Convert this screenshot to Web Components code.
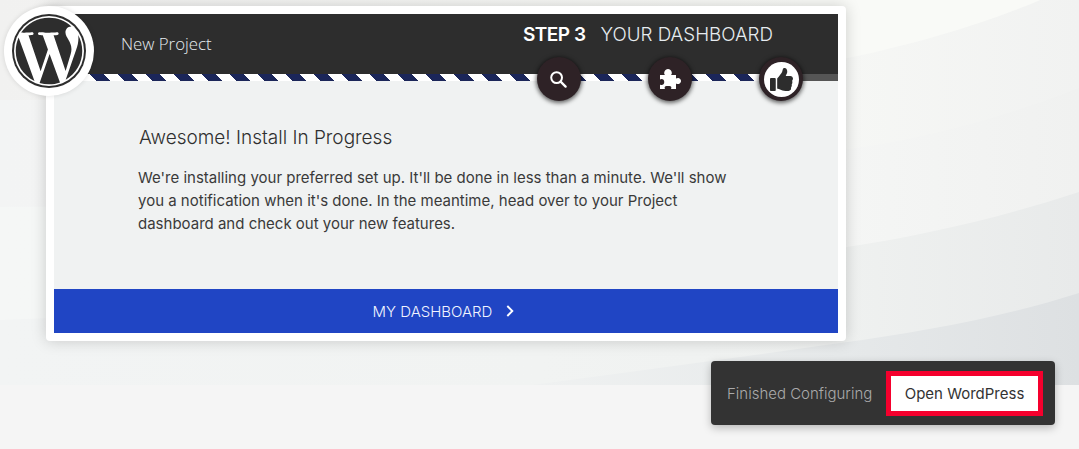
<!DOCTYPE html>
<html>
<head>
<meta charset="utf-8">
<title>New Project</title>
<style>
  html, body { margin: 0; padding: 0; background: #f5f5f5; }
  body { font-family: Inter, "Liberation Sans", sans-serif; overflow: hidden; }
</style>
</head>
<body>
<install-page>
  <wizard-card>
    <wizard-header slot="header" project="New Project" step="STEP 3" title="YOUR DASHBOARD"></wizard-header>
    <h2 slot="title">Awesome! Install In Progress</h2>
    <p slot="text">We're installing your preferred set up. It'll be done in less than a minute. We'll show<br>you a notification when it's done. In the meantime, head over to your Project<br>dashboard and check out your new features.</p>
    <span slot="cta">MY DASHBOARD</span>
  </wizard-card>
  <install-toast message="Finished Configuring" action="Open WordPress"></install-toast>
</install-page>

<script>
class InstallPage extends HTMLElement {
  constructor () {
    super()
    this.attachShadow({ mode: 'open' })
  }

  connectedCallback () {
    this.shadowRoot.innerHTML = /* html */ `
      <style>
        :host { display: block; position: relative; height: 449px; background: #f5f5f5; }
        .hero { position: relative; height: 385px; box-sizing: border-box; padding: 6px 0 0 46px; }
        svg { position: absolute; left: 0; top: 0; }
        ::slotted(wizard-card) { position: relative; }
      </style>
      <div class="hero">
        <svg width="1079" height="385" viewBox="0 0 1079 385">
          <defs>
            <linearGradient id="b5" x1="0" x2="1" y1="0" y2="0"><stop offset="0" stop-color="#f3f5f5"/><stop offset="0.5" stop-color="#eff1f1"/><stop offset="0.78" stop-color="#e6e9ea"/><stop offset="1" stop-color="#dde0e2"/></linearGradient>
            <linearGradient id="b4" x1="0" x2="1" y1="0" y2="0"><stop offset="0" stop-color="#f2f4f4"/><stop offset="0.5" stop-color="#f1f3f2"/><stop offset="0.78" stop-color="#eff1f0"/><stop offset="1" stop-color="#e8eaea"/></linearGradient>
            <linearGradient id="b3" x1="0" x2="1" y1="0" y2="0"><stop offset="0" stop-color="#f5f7f6"/><stop offset="0.78" stop-color="#f5f6f5"/><stop offset="1" stop-color="#f0f1f0"/></linearGradient>
            <linearGradient id="b2" x1="0" x2="1" y1="0" y2="0"><stop offset="0" stop-color="#f3f4f4"/><stop offset="0.78" stop-color="#f6f7f5"/><stop offset="1" stop-color="#f1f2f1"/></linearGradient>
            <linearGradient id="b1" x1="0" x2="1" y1="0" y2="0"><stop offset="0" stop-color="#f1f1f0"/><stop offset="0.78" stop-color="#f9faf7"/><stop offset="1" stop-color="#f9faf7"/></linearGradient>
          </defs>
          <rect width="1079" height="385" fill="url(#b5)"/>
          <path d="M0 0H1079V293C1000 318 920 332 840 343C720 360 600 376 480 392H0Z" fill="url(#b4)"/>
          <path d="M0 0H1079V192C1000 218 920 236 847 247C560 290 280 310 0 320Z" fill="url(#b3)"/>
          <path d="M0 0H1079V88C1020 112 930 138 857 148C560 190 280 205 0 207Z" fill="url(#b2)"/>
          <path d="M0 0H1040C990 22 910 46 847 58C560 95 280 100 0 100Z" fill="url(#b1)"/>
        </svg>
        <slot></slot>
      </div>
    `
  }
}

class WizardCard extends HTMLElement {
  constructor () {
    super()
    this.attachShadow({ mode: 'open' })
  }

  connectedCallback () {
    this.shadowRoot.innerHTML = /* html */ `
      <style>
        :host {
          display: block;
          width: 800px;
          height: 335px;
          box-sizing: border-box;
          padding: 8px;
          background: #fff;
          border-radius: 4px;
          box-shadow: 0 0 15px rgba(0, 0, 0, .18);
        }
        .inner { display: flex; flex-direction: column; height: 100%; background: #f0f2f2; }
        .body { flex: 1; padding: 47px 0 0 85px; }
        ::slotted(h2) {
          margin: 0 0 18px;
          font: 300 19px/20px Inter, "Liberation Sans", sans-serif;
          color: #2f2f2f;
        }
        ::slotted(p) {
          margin: 0 0 0 -1px;
          font: 400 15px/23px Inter, "Liberation Sans", sans-serif;
          color: #3a3a3a;
        }
        .cta {
          display: flex;
          align-items: center;
          justify-content: center;
          gap: 14px;
          height: 44px;
          padding-right: 5px;
          background: #2045c4;
          color: #f1f4ff;
          font: 300 15px/1 Inter, "Liberation Sans", sans-serif;
        }
        .cta svg { display: block; }
      </style>
      <div class="inner">
        <slot name="header"></slot>
        <div class="body">
          <slot name="title"></slot>
          <slot name="text"></slot>
        </div>
        <div class="cta">
          <slot name="cta"></slot>
          <svg width="8" height="12" viewBox="0 0 8 12"><path d="M1.3 1 6.3 6 1.3 11" fill="none" stroke="#fff" stroke-width="1.9"/></svg>
        </div>
      </div>
    `
  }
}

class WizardHeader extends HTMLElement {
  constructor () {
    super()
    this.attachShadow({ mode: 'open' })
  }

  connectedCallback () {
    this.shadowRoot.innerHTML = /* html */ `
      <style>
        :host { display: block; position: relative; z-index: 2; }
        .bar {
          display: flex;
          justify-content: space-between;
          height: 60px;
          background: #2d2d2d;
          color: #e6ecf0;
        }
        .project { padding: 19px 0 0 67px; font: 300 16.8px/21px "Open Sans", sans-serif; }
        .steps { display: flex; gap: 15px; padding: 9px 65px 0 0; font: 300 18.8px/24px Inter, sans-serif; }
        .steps b { font-weight: 600; font-size: 19px; letter-spacing: -.5px; color: #fff; }
        .track { height: 7px; background: #555; }
        .stripes {
          width: 712px;
          height: 7px;
          background: repeating-linear-gradient(45deg, #fff 0, #fff 9.9px, #1b2659 9.9px, #1b2659 19.8px);
        }
        .badges { position: absolute; left: 483px; top: 43px; display: flex; gap: 67px; }
        wp-logo { position: absolute; left: -50px; top: -8px; }
      </style>
      <wp-logo></wp-logo>
      <div class="bar">
        <div class="project">${this.getAttribute('project')}</div>
        <div class="steps"><b>${this.getAttribute('step')}</b><span>${this.getAttribute('title')}</span></div>
      </div>
      <div class="track"><div class="stripes"></div></div>
      <div class="badges">
        <step-badge icon="search"></step-badge>
        <step-badge icon="puzzle"></step-badge>
        <step-badge icon="thumb" active></step-badge>
      </div>
    `
  }
}

class StepBadge extends HTMLElement {
  constructor () {
    super()
    this.attachShadow({ mode: 'open' })
  }

  connectedCallback () {
    const icons = {
      search: '<svg style="margin-left:-1px" width="17" height="17" viewBox="0 0 17 17"><circle cx="6.6" cy="6.6" r="5.4" fill="none" stroke="#fff" stroke-width="2"/><path d="M10.6 10.6 15.6 15.6" stroke="#fff" stroke-width="2.3" stroke-linecap="round"/></svg>',
      puzzle: '<svg width="22" height="21" viewBox="0 0 22 21"><path fill="#fff" d="M1 6H6C5 5 5 4 5.5 2.5 6 1 7.5 0 9 0 10.5 0 12 1 12.5 2.5 13 4 13 5 12 6H17V9.5C18 9 19 8.7 20 9.2 21.500 9.800 22 11 22 12 22 13 21.500 14.300 20 14.900 19 15.300 18 15 17 14.500V20H12C12.500 19 12.600 18 11.500 17.300 10.500 16.800 7.500 16.800 6.500 17.300 5.400 18 5.500 19 6 20H1V15.500C2 16.300 3.500 16.300 4.500 15.300 5.500 14.300 5.500 11.700 4.500 10.700 3.500 9.700 2 9.700 1 10.500Z"/></svg>',
      thumb: '<svg width="23" height="23" viewBox="0 0 512 512"><path fill="#2d2d2d" d="M104 224H24c-13.255 0-24 10.745-24 24v240c0 13.255 10.745 24 24 24h80c13.255 0 24-10.745 24-24V248c0-13.255-10.745-24-24-24zM384 81.452c0 42.416-25.97 66.208-33.277 94.548h101.723c33.397 0 59.397 27.746 59.553 58.098.084 17.938-7.546 37.249-19.439 49.197l-.11.11c9.836 23.337 8.237 56.037-9.308 79.469 8.681 25.895-.069 57.704-16.382 74.757 4.298 17.598 2.244 32.575-6.148 44.632C440.202 511.587 389.616 512 346.839 512l-2.845-.001c-48.287-.017-87.806-17.598-119.56-31.725-15.957-7.099-36.821-15.887-52.651-16.178-6.54-.12-11.783-5.457-11.783-11.998v-213.770c0-3.2 1.282-6.271 3.558-8.521 39.614-39.144 56.648-80.587 89.117-113.111 14.804-14.832 20.188-37.236 25.393-58.902C282.515 39.293 291.817 0 312 0c24 0 72 8 72 81.452z"/></svg>'
    }
    this.shadowRoot.innerHTML = /* html */ `
      <style>
        :host {
          display: flex;
          align-items: center;
          justify-content: center;
          width: 44px;
          height: 44px;
          border-radius: 50%;
          background: #2e2226;
          box-shadow: 0 1px 4px 1px rgba(0, 0, 0, .6);
        }
        .disc { display: flex; align-items: center; justify-content: center; width: 35px; height: 35px; border-radius: 50%; }
        :host([active]) .disc { background: #fff; }
        svg { display: block; }
      </style>
      <div class="disc">${icons[this.getAttribute('icon')]}</div>
    `
  }
}

class WpLogo extends HTMLElement {
  constructor () {
    super()
    this.attachShadow({ mode: 'open' })
  }

  connectedCallback () {
    this.shadowRoot.innerHTML = /* html */ `
      <style>
        :host {
          display: flex;
          align-items: center;
          justify-content: center;
          width: 90px;
          height: 90px;
          border-radius: 50%;
          background: #fff;
          box-shadow: 0 0 5px rgba(0, 0, 0, .12);
        }
        svg { display: block; }
      </style>
      <svg width="74" height="74" viewBox="0 0 24 24">
        <circle cx="12" cy="12" r="12" fill="#2d2d2d"/>
        <circle cx="12" cy="12" r="11.35" fill="#fff"/>
        <path fill="#2d2d2d" d="M21.469 6.825c.84 1.537 1.318 3.3 1.318 5.175 0 3.979-2.156 7.456-5.363 9.325l3.295-9.527c.615-1.54.82-2.771.82-3.864 0-.405-.026-.78-.07-1.11m-7.981.105c.647-.03 1.232-.105 1.232-.105.582-.075.514-.93-.067-.899 0 0-1.755.135-2.88.135-1.064 0-2.85-.15-2.85-.15-.585-.03-.661.855-.075.885 0 0 .54.061 1.125.09l1.68 4.605-2.37 7.08L5.354 6.9c.649-.03 1.234-.1 1.234-.1.585-.075.516-.93-.065-.896 0 0-1.746.138-2.874.138-.2 0-.438-.008-.69-.015C4.911 3.15 8.235 1.215 12 1.215c2.809 0 5.365 1.072 7.286 2.833-.046-.003-.091-.009-.141-.009-1.06 0-1.812.923-1.812 1.914 0 .89.513 1.643 1.06 2.531.411.72.89 1.643.89 2.977 0 .915-.354 1.994-.821 3.479l-1.075 3.585-3.9-11.61.001.014zM12 22.784c-1.059 0-2.081-.153-3.048-.437l3.237-9.406 3.315 9.087c.024.053.05.101.078.149-1.12.393-2.325.609-3.582.609M1.211 12c0-1.564.336-3.05.935-4.39L7.29 21.709C3.694 19.96 1.212 16.271 1.211 12"/>
      </svg>
    `
  }
}

class InstallToast extends HTMLElement {
  constructor () {
    super()
    this.attachShadow({ mode: 'open' })
  }

  connectedCallback () {
    this.shadowRoot.innerHTML = /* html */ `
      <style>
        :host {
          position: absolute;
          left: 711px;
          top: 361px;
          display: flex;
          align-items: center;
          justify-content: space-between;
          box-sizing: border-box;
          width: 344px;
          height: 64px;
          padding: 0 12px 0 16px;
          background: #333;
          border-radius: 4px;
          box-shadow: 0 3px 8px rgba(0, 0, 0, .25);
          font: 400 15px/1 Inter, "Liberation Sans", sans-serif;
        }
        .msg { color: #aaa; font-weight: 300; }
        .action {
          display: flex;
          align-items: center;
          justify-content: center;
          box-sizing: border-box;
          width: 157px;
          height: 45px;
          border: 5px solid #f5002d;
          background: #fff;
          color: #333;
        }
      </style>
      <span class="msg">${this.getAttribute('message')}</span>
      <span class="action">${this.getAttribute('action')}</span>
    `
  }
}

customElements.define('install-page', InstallPage)
customElements.define('wizard-card', WizardCard)
customElements.define('wizard-header', WizardHeader)
customElements.define('step-badge', StepBadge)
customElements.define('wp-logo', WpLogo)
customElements.define('install-toast', InstallToast)
</script>
</body>
</html>
